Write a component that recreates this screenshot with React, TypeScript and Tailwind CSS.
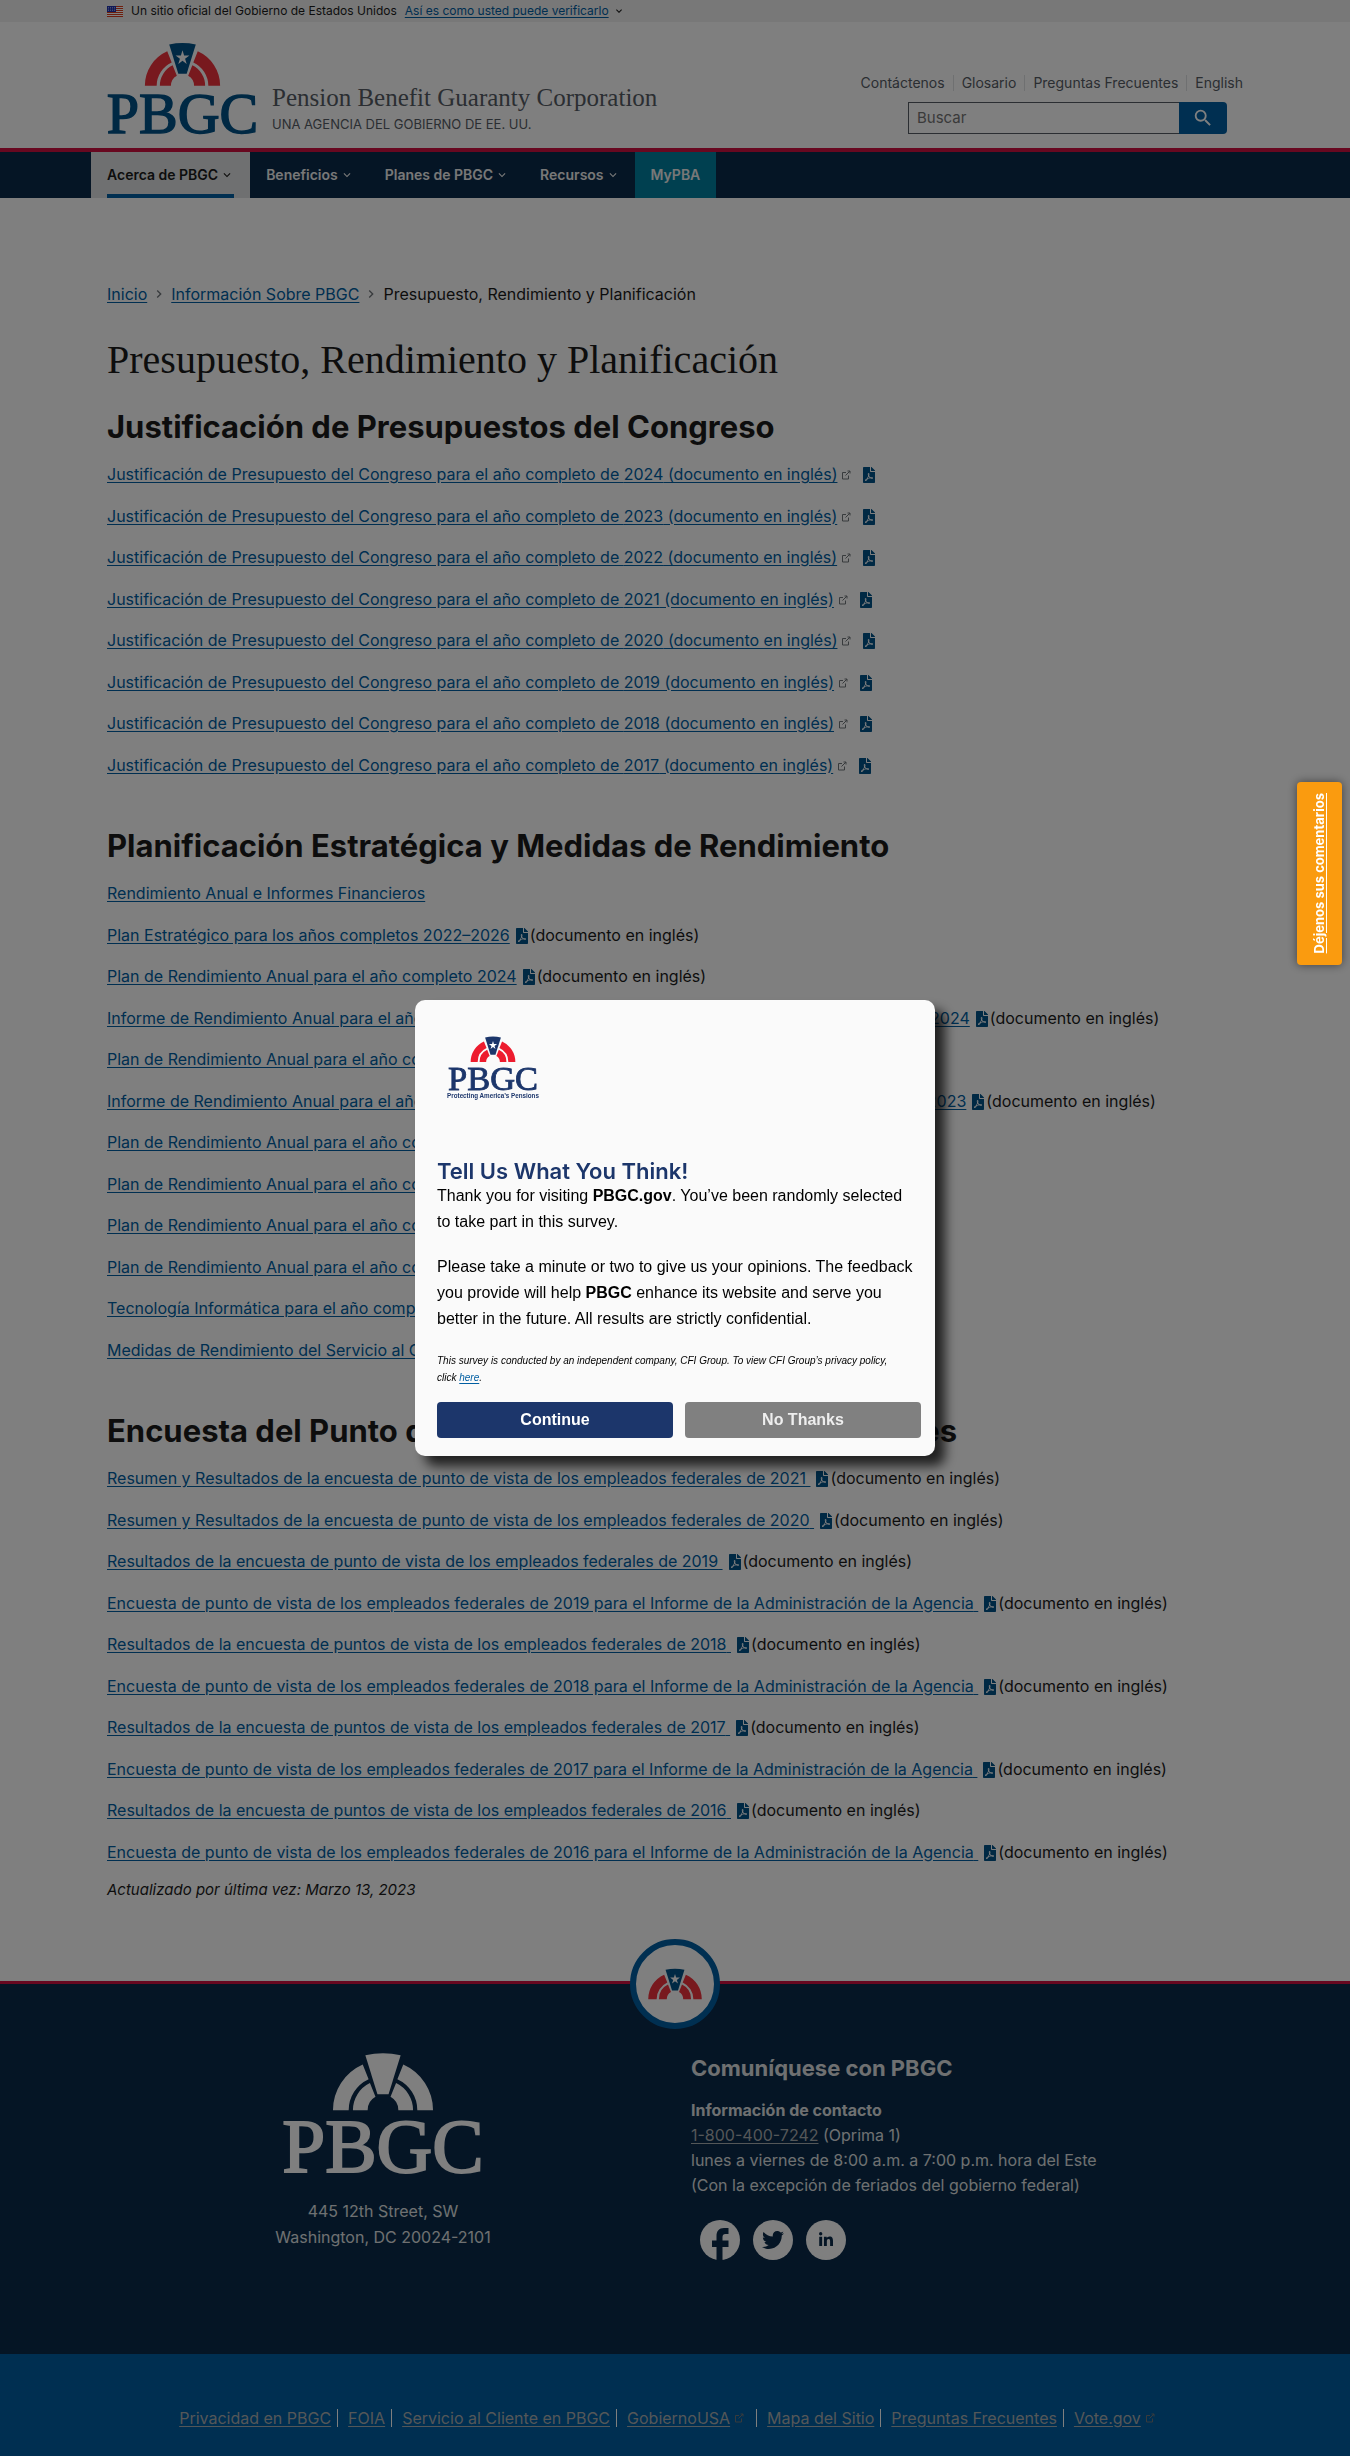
import React from "react";
import { FaFilePdf, FaTwitter, FaLinkedinIn } from "react-icons/fa";
import { MdExpandMore, MdNavigateNext, MdSearch } from "react-icons/md";

const LINK = "text-[#005ea2] underline underline-offset-2";

/* Arch of two ring segments on each side of a keystone, centred on x = 0 and standing on y = 0. */
function Arch({ ring, keystone, star }: { ring: string; keystone: string; star?: string }) {
  const segments =
    "M-153 0A153 153 0 0 1 -62 -140L-44 -95A105 105 0 0 0 -105 0Z M-92 0A92 92 0 0 1 -40 -83L-23 -41A47 47 0 0 0 -47 0Z";
  return (
    <g>
      <path d={segments} fill={ring} />
      <path d={segments} fill={ring} transform="scale(-1 1)" />
      <path d="M-54 -168Q0 -180 54 -168L17 -49H-17Z" fill={keystone} />
      {star && (
        <path
          d="M0 -144L6.500 -123H28L10.500 -110L17 -89L0 -102L-17 -89L-10.500 -110L-28 -123H-6.500Z"
          fill={star}
        />
      )}
    </g>
  );
}

function Logo({
  className,
  ring,
  ink,
  star,
  tagline,
}: {
  className: string;
  ring: string;
  ink: string;
  star?: string;
  tagline?: string;
}) {
  return (
    <svg
      viewBox={tagline ? "-315 -178 630 440" : "-315 -178 630 374"}
      className={`overflow-visible ${className}`}
      role="img"
      aria-label="PBGC"
    >
      <Arch ring={ring} keystone={ink} star={star} />
      <text
        x="0"
        y="190"
        textAnchor="middle"
        fontFamily="Liberation Serif, serif"
        fontSize="236"
        fill={ink}
        stroke={ink}
        strokeWidth="6"
      >
        PBGC
      </text>
      {tagline && (
        <text x="0" y="246" textAnchor="middle" fontFamily="Liberation Sans, sans-serif" fontSize="43" fontWeight="bold" fill={ink}>
          {tagline}
        </text>
      )}
    </svg>
  );
}

function Flag() {
  return (
    <svg viewBox="0 0 16 11" className="h-[11px] w-4" aria-hidden="true">
      <rect width="16" height="11" fill="#fff" />
      {[0, 2, 4, 6, 8, 10].map((y) => (
        <rect key={y} y={y} width="16" height="1" fill="#db3e1f" />
      ))}
      <rect width="9" height="6" fill="#1e33b1" />
      <path d="M1 1.500h7M1 3h7M1 4.500h7" stroke="#fff" strokeWidth=".5" strokeDasharray="1 1" />
    </svg>
  );
}

function External({ className = "" }: { className?: string }) {
  return (
    <svg
      viewBox="0 0 10 10"
      className={`ml-1 inline-block size-[10px] align-baseline ${className}`}
      fill="none"
      stroke="currentColor"
      aria-label="enlace externo"
    >
      <path d="M5 2.500H1.500V9H7.500V5.500M4.500 5.500L9 1M6.500 1H9V3.500" />
    </svg>
  );
}

const years = [2024, 2023, 2022, 2021, 2020, 2019, 2018, 2017];

type Item = { text: string; note?: boolean };

const planning: Item[] = [
  { text: "Rendimiento Anual e Informes Financieros" },
  { text: "Plan Estratégico para los años completos 2022–2026", note: true },
  { text: "Plan de Rendimiento Anual para el año completo 2024", note: true },
  {
    text: "Informe de Rendimiento Anual para el año completo 2022 y Plan de Rendimiento Anual para el año completo 2024",
    note: true,
  },
  { text: "Plan de Rendimiento Anual para el año completo 2023" },
  {
    text: "Informe de Rendimiento Anual para el año completo 2021 y Plan de Rendimiento Anual para el año completo 2023",
    note: true,
  },
  { text: "Plan de Rendimiento Anual para el año completo 2022" },
  { text: "Plan de Rendimiento Anual para el año completo 2021" },
  { text: "Plan de Rendimiento Anual para el año completo 2020" },
  { text: "Plan de Rendimiento Anual para el año completo 2019" },
  { text: "Tecnología Informática para el año completo 2019" },
  { text: "Medidas de Rendimiento del Servicio al Cliente" },
];

const survey = [
  "Resumen y Resultados de la encuesta de punto de vista de los empleados federales de 2021",
  "Resumen y Resultados de la encuesta de punto de vista de los empleados federales de 2020",
  "Resultados de la encuesta de punto de vista de los empleados federales de 2019",
  "Encuesta de punto de vista de los empleados federales de 2019 para el Informe de la Administración de la Agencia",
  "Resultados de la encuesta de puntos de vista de los empleados federales de 2018",
  "Encuesta de punto de vista de los empleados federales de 2018 para el Informe de la Administración de la Agencia",
  "Resultados de la encuesta de puntos de vista de los empleados federales de 2017",
  "Encuesta de punto de vista de los empleados federales de 2017 para el Informe de la Administración de la Agencia",
  "Resultados de la encuesta de puntos de vista de los empleados federales de 2016",
  "Encuesta de punto de vista de los empleados federales de 2016 para el Informe de la Administración de la Agencia",
];

const footerLinks = [
  { text: "Privacidad en PBGC" },
  { text: "FOIA" },
  { text: "Servicio al Cliente en PBGC" },
  { text: "GobiernoUSA", ext: true },
  { text: "Mapa del Sitio" },
  { text: "Preguntas Frecuentes" },
  { text: "Vote.gov", ext: true },
];

function SectionTitle({ children }: { children: React.ReactNode }) {
  return <h2 className="mb-[15px] text-[31px] leading-10 font-bold">{children}</h2>;
}

function Pdf({ className }: { className: string }) {
  return <FaFilePdf className={`inline h-4 w-3 align-[-3px] text-[#005288] ${className}`} />;
}

function Header() {
  return (
    <header>
      <div className="bg-[#f0f0f0]">
        <div className="mx-auto flex h-[22px] max-w-[1200px] items-center px-8 text-xs">
          <Flag />
          <span className="ml-2">Un sitio oficial del Gobierno de Estados Unidos</span>
          <button type="button" className="ml-2 flex items-center text-[#005ea2]">
            <span className="underline underline-offset-2">Así es como usted puede verificarlo</span>
            <MdExpandMore className="ml-1 size-3 text-[#1b1b1b]" />
          </button>
        </div>
      </div>
      <div className="mx-auto flex max-w-[1200px] items-end justify-between px-8 pt-5 pb-3.5">
        <a href="#" className="-ml-0.5 flex items-end gap-3 text-[#565c65]">
          <Logo className="w-[155px]" ring="#f0323c" ink="#005288" star="#fff" />
          <span className="flex flex-col">
            <span className="font-['Liberation_Serif',serif] text-[25px] leading-8">Pension Benefit Guaranty Corporation</span>
            <span className="text-[13px] leading-5">UNA AGENCIA DEL GOBIERNO DE EE. UU.</span>
          </span>
        </a>
        <div className="flex flex-col items-end">
          <ul className="flex text-sm leading-4 text-[#565c65]">
            {["Contáctenos", "Glosario", "Preguntas Frecuentes", "English"].map((t, i) => (
              <li key={t} className={i ? "ml-2 border-l border-[#dfe1e2] pl-2" : ""}>
                <a href="#">{t}</a>
              </li>
            ))}
          </ul>
          <form className="mt-[11px] mr-4 flex h-8" onSubmit={(e) => e.preventDefault()}>
            <input
              type="search"
              aria-label="Buscar"
              placeholder="Buscar"
              className="w-[271px] border border-r-0 border-[#565c65] px-2 text-[15px] placeholder:text-[#757575]"
            />
            <button type="submit" aria-label="Buscar" className="flex w-12 items-center justify-center rounded-r bg-[#005ea2]">
              <MdSearch className="size-[22px] text-white" />
            </button>
          </form>
        </div>
      </div>
      <nav className="border-t-4 border-[#d01040] bg-[#0a2a4a] text-[#f0f0f0]">
        <ul className="mx-auto flex h-[46px] max-w-[1200px] px-4 text-sm font-semibold">
          {["Acerca de PBGC", "Beneficios", "Planes de PBGC", "Recursos"].map((t, i) => (
            <li key={t} className={i ? "pr-[15px] pl-4" : "bg-[#dfe1e2] px-4 text-[#1b1b1b]"}>
              <button
                type="button"
                className={i ? "flex h-full items-center" : "flex h-full items-center border-b-4 border-[#005ea2] pt-1"}
              >
                {t}
                <MdExpandMore className="ml-0.5 size-[14px]" />
              </button>
            </li>
          ))}
          <li className="flex items-center bg-[#0081a1] px-4">
            <a href="#">MyPBA</a>
          </li>
        </ul>
      </nav>
    </header>
  );
}

function Main() {
  return (
    <main className="mx-auto max-w-[1200px] px-8 pt-[84px] pb-[79px] leading-normal">
      <nav aria-label="Ruta" className="flex items-center text-base leading-6">
        <a href="#" className={LINK}>
          Inicio
        </a>
        <MdNavigateNext className="mx-1 size-4 text-[#71767a]" />
        <a href="#" className={LINK}>
          Información Sobre PBGC
        </a>
        <MdNavigateNext className="mx-1 size-4 text-[#71767a]" />
        <span>Presupuesto, Rendimiento y Planificación</span>
      </nav>
      <h1 className="mt-[30px] mb-[23px] font-['Liberation_Serif',serif] text-[40px] leading-12">
        Presupuesto, Rendimiento y Planificación
      </h1>

      <SectionTitle>Justificación de Presupuestos del Congreso</SectionTitle>
      <ul className="mb-12 flex flex-col gap-4 text-[17px]">
        {years.map((y) => (
          <li key={y}>
            <a href="#" className="text-base text-[#005ea2]">
              <span className="underline underline-offset-2">
                Justificación de Presupuesto del Congreso para el año completo de {y} (documento en inglés)
              </span>
              <External className="text-[#71767a]" />
              <Pdf className="ml-3" />
            </a>
          </li>
        ))}
      </ul>

      <SectionTitle>Planificación Estratégica y Medidas de Rendimiento</SectionTitle>
      <ul className="mb-12 flex flex-col gap-4 text-[17px]">
        {planning.map((p) => (
          <li key={p.text}>
            <a href="#" className={`text-base ${LINK}`}>
              {p.text}
            </a>
            {p.note && (
              <span className="text-base">
                <Pdf className="mr-0.5 ml-1.5" />
                (documento en inglés)
              </span>
            )}
          </li>
        ))}
      </ul>

      <SectionTitle>Encuesta del Punto de Vista de los Empleados Federales</SectionTitle>
      <ul className="mb-[13px] flex flex-col gap-4 text-[17px]">
        {survey.map((t) => (
          <li key={t}>
            <a href="#" className={`text-base ${LINK}`}>
              {t}&nbsp;
            </a>
            <span className="text-base">
              <Pdf className="mr-0.5 ml-1.5" />
              (documento en inglés)
            </span>
          </li>
        ))}
      </ul>
      <p className="text-[15px] leading-6 italic">Actualizado por última vez: Marzo 13, 2023</p>
    </main>
  );
}

function Footer() {
  return (
    <footer className="relative border-t-[3px] border-[#d01040] bg-[#0a2a4a] text-[#dfe1e2]">
      <a
        href="#"
        aria-label="Volver arriba"
        className="absolute -top-[45px] left-1/2 flex size-[90px] -translate-x-1/2 items-center justify-center rounded-full border-[6px] border-[#005ea2] bg-white"
      >
        <svg viewBox="-160 -178 320 184" className="w-14" aria-hidden="true">
          <Arch ring="#f0323c" keystone="#005288" star="#fff" />
        </svg>
      </a>
      <div className="mx-auto grid max-w-[1200px] grid-cols-2 gap-8 px-8 pt-[68px] pb-[94px]">
        <div className="flex flex-col items-center text-center text-base leading-[26px]">
          <Logo className="mb-6 w-[206px]" ring="#fff" ink="#fff" />
          <p>
            445 12th Street, SW
            <br />
            Washington, DC 20024-2101
          </p>
        </div>
        <div className="text-base">
          <h3 className="mb-3.5 text-[22px] leading-8 font-bold">Comuníquese con PBGC</h3>
          <p className="leading-[25px]">
            <strong>Información de contacto</strong>
            <br />
            <a href="tel:18004007242" className="text-[#a9aeb1] underline underline-offset-2">
              1-800-400-7242
            </a>{" "}
            (Oprima 1)
            <br />
            lunes a viernes de 8:00 a.m. a 7:00 p.m. hora del Este
            <br />
            (Con la excepción de feriados del gobierno federal)
          </p>
          <div className="mt-[22px] ml-[9px] flex gap-[13px] text-[#0a2a4a]">
            <a href="#" aria-label="Facebook" className="size-10">
              <svg viewBox="0 0 40 40" aria-hidden="true">
                <circle cx="20" cy="20" r="20" fill="#fff" />
                <path
                  d="M16.500 40V27H12V20.500H16.500V16C16.500 11 19 8 24 8H28.500V14H25.500C23.500 14 22.500 15 22.500 17V20.500H28.500V27H22.500V40Z"
                  fill="currentColor"
                />
              </svg>
            </a>
            <a href="#" aria-label="Twitter" className="flex size-10 items-center justify-center rounded-full bg-white">
              <FaTwitter className="size-[22px]" />
            </a>
            <a href="#" aria-label="LinkedIn" className="flex size-10 items-center justify-center rounded-full bg-white">
              <FaLinkedinIn className="size-4" />
            </a>
          </div>
        </div>
      </div>
      <div className="bg-[#005ea2] pt-[52px] pb-[26px]">
        <ul className="mx-auto flex max-w-[1200px] justify-center px-6 pr-10 text-base leading-6 text-[#a9aeb1]">
          {footerLinks.map((l, i) => (
            <li key={l.text} className="flex items-center">
              {i > 0 && <span className="mr-2.5 ml-1.5 h-[18px] w-px bg-white" />}
              <a href="#" className="underline underline-offset-2">
                {l.text}
              </a>
              {l.ext && <External className={i < 6 ? "mr-1.5 text-[#71767a]" : "text-[#71767a]"} />}
            </li>
          ))}
        </ul>
      </div>
    </footer>
  );
}

function SurveyDialog() {
  return (
    <div className="fixed inset-0 flex items-center justify-center bg-black/50">
      <div
        role="dialog"
        aria-modal="true"
        aria-labelledby="survey-title"
        className="w-[520px] rounded-[10px] bg-[#fafafa] pt-9 pr-3.5 pb-[18px] pl-[22px] font-['Liberation_Sans',Arial,sans-serif] text-black shadow-[10px_10px_12px_rgba(0,0,0,0.75)]"
      >
        <Logo className="ml-2.5 w-[92px]" ring="#ed1c2e" ink="#1c366b" star="#fff" tagline="Protecting America’s Pensions" />
        <h2
          id="survey-title"
          className="mt-[59px] font-[Inter,sans-serif] text-[22px] leading-6 font-semibold text-[#1c366b]"
        >
          Tell Us What You Think!
        </h2>
        <p className="pr-1.5 text-base leading-[26px]">
          Thank you for visiting <b>PBGC.gov</b>. You’ve been randomly selected to take part in this survey.
        </p>
        <p className="mt-[19px] pr-1.5 text-base leading-[26px]">
          Please take a minute or two to give us your opinions. The feedback you provide will help <b>PBGC</b> enhance its
          website and serve you better in the future. All results are strictly confidential.
        </p>
        <p className="mt-5 text-[10px] leading-[17px] italic">
          This survey is conducted by an independent company, CFI Group. To view CFI Group’s privacy policy,
          <br />
          click{" "}
          <a href="#" className={LINK}>
            here
          </a>
          .
        </p>
        <div className="mt-4 flex gap-3 text-base font-bold">
          <button type="button" className="h-9 flex-1 rounded bg-[#1c366b] text-white">
            Continue
          </button>
          <button type="button" className="h-9 flex-1 rounded bg-[#808080] text-[#eeeeee]">
            No Thanks
          </button>
        </div>
      </div>
    </div>
  );
}

export default function App() {
  return (
    <div className="bg-white font-[Inter,sans-serif] text-[#1b1b1b]">
      <Header />
      <Main />
      <Footer />
      <SurveyDialog />
      <button
        type="button"
        className="fixed top-[782px] right-2 flex h-[183px] w-[45px] items-center justify-center rounded-sm bg-[#fa9b0f] text-[13px] font-bold text-white shadow-[0_0_10px_rgba(0,0,0,0.5)]"
      >
        <span className="rotate-180 underline [writing-mode:vertical-rl]">Déjenos sus comentarios</span>
      </button>
    </div>
  );
}
